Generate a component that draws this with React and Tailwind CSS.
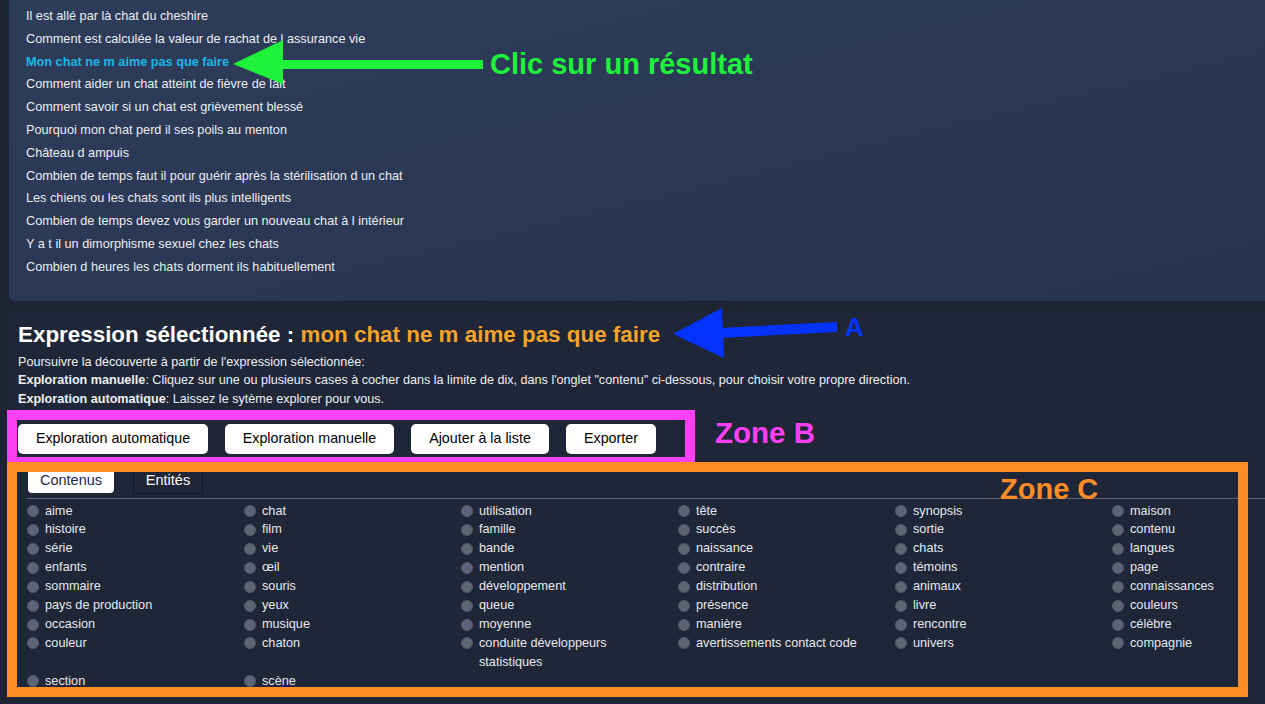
import React from "react";

const results = [
  "Il est allé par là chat du cheshire",
  "Comment est calculée la valeur de rachat de l assurance vie",
  "Mon chat ne m aime pas que faire",
  "Comment aider un chat atteint de fièvre de lait",
  "Comment savoir si un chat est grièvement blessé",
  "Pourquoi mon chat perd il ses poils au menton",
  "Château d ampuis",
  "Combien de temps faut il pour guérir après la stérilisation d un chat",
  "Les chiens ou les chats sont ils plus intelligents",
  "Combien de temps devez vous garder un nouveau chat à l intérieur",
  "Y a t il un dimorphisme sexuel chez les chats",
  "Combien d heures les chats dorment ils habituellement",
];

// row-major, six columns
const contenus = [
  "aime", "chat", "utilisation", "tête", "synopsis", "maison",
  "histoire", "film", "famille", "succès", "sortie", "contenu",
  "série", "vie", "bande", "naissance", "chats", "langues",
  "enfants", "œil", "mention", "contraire", "témoins", "page",
  "sommaire", "souris", "développement", "distribution", "animaux", "connaissances",
  "pays de production", "yeux", "queue", "présence", "livre", "couleurs",
  "occasion", "musique", "moyenne", "manière", "rencontre", "célèbre",
  "couleur", "chaton", "conduite développeurs statistiques", "avertissements contact code", "univers", "compagnie",
  "section", "scène",
];

const buttons = [
  { label: "Exploration automatique", w: "w-[190px]" },
  { label: "Exploration manuelle", w: "w-[169px]" },
  { label: "Ajouter à la liste", w: "w-[138px]" },
  { label: "Exporter", w: "w-[90px]" },
];

function CheckItem({ label }) {
  return (
    <div className="flex items-start">
      <span className="mt-[3.5px] h-[12px] w-[12px] shrink-0 rounded-full border border-[#525a69] bg-[#5d6473]" />
      <span className="ml-[6px] max-w-[175px] text-[#e7e9ed]">{label}</span>
    </div>
  );
}

export default function App() {
  return (
    <div className="relative h-[704px] w-full overflow-hidden bg-[#1d2333] font-['Liberation_Sans',Arial,sans-serif]">
      {/* results list */}
      <div className="ml-[9px] rounded-bl-[6px] bg-gradient-to-br from-[#2d3c59] to-[#273450] pb-[22px] pl-[17px] pt-[5px] text-[12.7px] leading-[22.8px] text-[#eceef2]">
        {results.map((r, i) => (
          <div
            key={r}
            className={i === 2 ? "font-bold text-[#1db6e6]" : ""}
          >
            {r}
          </div>
        ))}
      </div>

      {/* selected expression */}
      <div className="ml-[9px] mt-[10px] h-[400px] rounded-tl-[6px] bg-[#1f2637] pl-[9px] pt-[12px] text-white">
        <h2 className="text-[22.4px] font-bold leading-[24px]">
          Expression sélectionnée :{" "}
          <span className="text-[#f5a42a]">mon chat ne m aime pas que faire</span>
        </h2>
        <div className="mt-[6px] text-[12.6px] leading-[18.5px] text-[#eef0f3]">
          <p>Poursuivre la découverte à partir de l'expression sélectionnée:</p>
          <p>
            <b>Exploration manuelle</b>: Cliquez sur une ou plusieurs cases à cocher dans la limite de dix, dans l'onglet "contenu" ci-dessous, pour choisir votre propre direction.
          </p>
          <p>
            <b>Exploration automatique</b>: Laissez le sytème explorer pour vous.
          </p>
        </div>

        <div className="mt-[15.5px] flex gap-[17px]">
          {buttons.map((b) => (
            <button
              key={b.label}
              className={`${b.w} h-[30px] rounded-[5px] bg-white text-[14.3px] text-black`}
            >
              {b.label}
            </button>
          ))}
        </div>

        <div className="ml-[10px] mt-[15px] flex gap-[19px] text-[14.5px]">
          <div className="flex h-[24px] w-[86px] items-center justify-center rounded-b-[4px] bg-white text-[#1d2a45]">
            Contenus
          </div>
          <div className="flex h-[25px] w-[70px] items-center justify-center border border-[#10141f] text-white">
            Entités
          </div>
        </div>
        <div className="ml-[9px] mt-[4px] h-px bg-[#5b6272]" />

        <div className="ml-[9px] mt-[3px] grid grid-cols-[repeat(6,217px)] text-[12.7px] leading-[18.9px]">
          {contenus.map((c) => (
            <CheckItem key={c} label={c} />
          ))}
        </div>
      </div>

      {/* annotations */}
      <svg
        className="pointer-events-none absolute left-0 top-0"
        width="1265"
        height="704"
        viewBox="0 0 1265 704"
      >
        <polygon points="233,64 283,40 283,84" fill="#1ff23b" />
        <rect x="281" y="60" width="202" height="9" fill="#1ff23b" />
        <polygon points="673,334 722,308 724,358" fill="#0433ff" />
        <polygon points="720,328 837,322 837,332 720,338" fill="#0433ff" />
      </svg>

      <div className="absolute left-[490px] top-[48px] text-[29px] font-bold leading-[33px] text-[#1ff23b]">
        Clic sur un résultat
      </div>
      <div className="absolute left-[845px] top-[312px] text-[26px] font-bold leading-[30px] text-[#0433ff]">
        A
      </div>

      <div className="pointer-events-none absolute left-[7px] top-[410px] h-[57px] w-[688px] border-[10px] border-[#fd3ff5]" />
      <div className="absolute left-[715px] top-[416px] text-[29.5px] font-bold leading-[34px] text-[#fd3ff5]">
        Zone B
      </div>

      <div className="pointer-events-none absolute left-[7px] top-[462px] h-[235px] w-[1241px] border-[10px] border-[#ff8c26]" />
      <div className="absolute left-[1000px] top-[472px] text-[29px] font-bold leading-[34px] text-[#ff8c26]">
        Zone C
      </div>
    </div>
  );
}
